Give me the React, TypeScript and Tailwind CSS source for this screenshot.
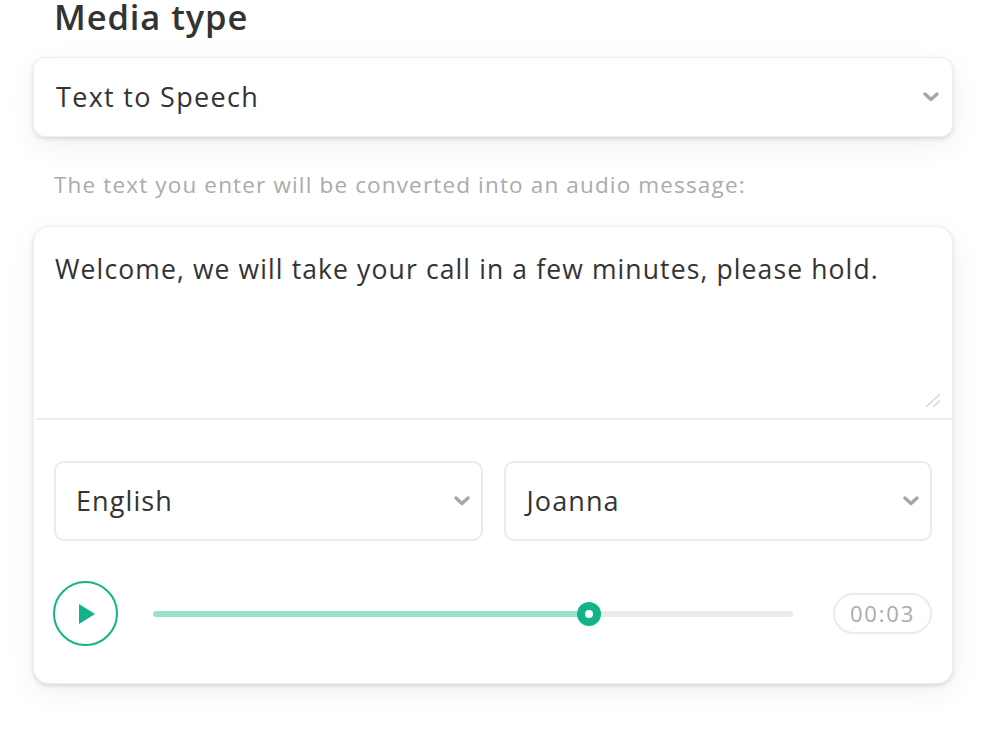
import React from "react";

const Chevron = ({ className = "" }: { className?: string }) => (
  <svg width="16" height="10" viewBox="0 0 16 10" className={className}>
    <path d="M2 2 L8 7.5 L14 2" fill="none" stroke="#a6a6a6" strokeWidth="3.4" strokeLinecap="round" strokeLinejoin="round" />
  </svg>
);

export default function App() {
  return (
    <div
      className="w-[985px] h-[749px] bg-white overflow-hidden text-[#333333]"
      style={{ fontFamily: "'Open Sans', 'Noto Sans', sans-serif" }}
    >
      <div className="pl-[33px] pr-[32px] pt-[1px]">
        <h1 className="pl-[21px] text-[34.5px] leading-[32px] font-semibold text-[#333] tracking-[0.9px]">Media type</h1>
        <div className="mt-[24px] h-[80px] rounded-[12px] bg-white border border-[#efefef] shadow-[0_2px_4px_rgba(0,0,0,0.12),0_8px_30px_rgba(0,0,0,0.06)] flex items-center justify-between pl-[22px] pr-[13px]">
          <span className="text-[27px] font-medium tracking-[1.3px]">Text to Speech</span>
          <Chevron />
        </div>
        <p className="mt-[34px] pl-[21px] text-[22.5px] leading-[28px] text-[#ababab] tracking-[1.15px]">
          The text you enter will be converted into an audio message:
        </p>
        <div className="mt-[27px] h-[458px] rounded-[16px] bg-white border border-[#efefef] shadow-[0_2px_4px_rgba(0,0,0,0.12),0_8px_30px_rgba(0,0,0,0.06)] flex flex-col">
          <div className="relative h-[193px] border-b-2 border-[#ececec] ml-[2px] pl-[19px] pt-[25px]">
            <p className="text-[26.5px] leading-[34px] tracking-[1.12px] text-[#333]">
              Welcome, we will take your call in a few minutes, please hold.
            </p>
            <svg className="absolute right-[10px] bottom-[10px]" width="18" height="16" viewBox="0 0 18 16">
              <path d="M2 15 L16 2 M9 15 L16 8.5" stroke="#d4d4d4" strokeWidth="1.4" fill="none" />
            </svg>
          </div>
          <div className="px-[20px] pt-[41px] grid grid-cols-2 gap-[21px]">
            <div className="h-[80px] rounded-[10px] border-2 border-[#ebebeb] flex items-center justify-between pl-[20px] pr-[11px]">
              <span className="text-[27px] font-medium tracking-[1.1px]">English</span>
              <Chevron />
            </div>
            <div className="h-[80px] rounded-[10px] border-2 border-[#ebebeb] flex items-center justify-between pl-[21px] pr-[11px]">
              <span className="text-[27px] font-medium tracking-[1.1px]">Joanna</span>
              <Chevron />
            </div>
          </div>
          <div className="px-[19px] pt-[40px] flex items-center">
            <div className="w-[65px] h-[65px] rounded-full border-2 border-[#12b389] flex items-center justify-center">
              <svg width="18" height="20" viewBox="0 0 18 20" className="ml-[3px]">
                <path d="M1 0 L17 10 L1 20 Z" fill="#12b389" />
              </svg>
            </div>
            <div className="ml-[35px] w-[640px] h-[6px] rounded-full bg-[#ebebeb] relative">
              <div className="h-full w-[436px] rounded-full bg-[#98e2cc]" />
              <div className="absolute left-[424px] top-[-9px] w-[24px] h-[24px] rounded-full bg-[#12b389] flex items-center justify-center">
                <div className="w-[8px] h-[8px] rounded-full bg-white" />
              </div>
            </div>
            <div className="ml-[40px] w-[99px] h-[41px] rounded-full border-2 border-[#ebebeb] flex items-center justify-center text-[22px] text-[#aaaaaa] tracking-[1.8px]">
              00:03
            </div>
          </div>
        </div>
      </div>
    </div>
  );
}
